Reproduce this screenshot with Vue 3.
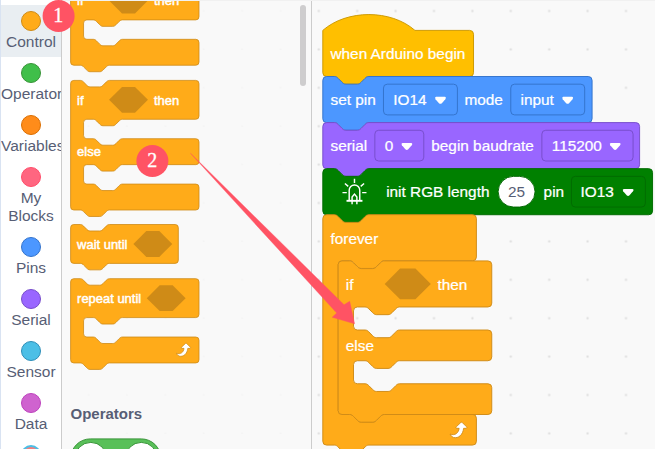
<script setup>
const categories = [
  { name: 'Control', color: '#FFAB19', ring: '#CF8B17', active: true },
  { name: 'Operators', color: '#40BF4A', ring: '#389438' },
  { name: 'Variables', color: '#FF8C1A', ring: '#DB6E00' },
  { name: 'My Blocks', color: '#FF6680', ring: '#FF4D6A', wrap: true },
  { name: 'Pins', color: '#4C97FF', ring: '#3373CC' },
  { name: 'Serial', color: '#9966FF', ring: '#774DCB' },
  { name: 'Sensor', color: '#4CBFE6', ring: '#2E8EB8' },
  { name: 'Data', color: '#CF63CF', ring: '#BD42BD' },
  { name: '', color: '#F08080', ring: '#4CBFE6', thick: true },
]

const notch = 'c2,0 3,1 4,2 l4,4 c1,1 2,2 4,2 h12 c2,0 3,-1 4,-2 l4,-4 c1,-1 2,-2 4,-2 '
const notchBack = 'c-2,0 -3,1 -4,2 l-4,4 c-1,1 -2,2 -4,2 h-12 c-2,0 -3,-1 -4,-2 l-4,-4 c-1,-1 -2,-2 -4,-2 '
const top = 'M0,4 A4,4 0 0,1 4,0 H12 ' + notch

// sections alternate: row height, mouth height, row height, ...
function blockPath(width, sections, hat = false) {
  let d = hat ? 'M0,0 c25,-22 71,-22 96,0 ' : top
  sections.forEach((size, i) => {
    if (i % 2 === 0) {
      d += `H${width - 4} a4,4 0 0,1 4,4 v${size - 8} a4,4 0 0,1 -4,4 `
    } else {
      d += `H64 ${notchBack} h-8 a4,4 0 0,0 -4,4 v${size - 8} a4,4 0 0,0 4,4 h8 ${notch}`
    }
  })
  return d + `H48 ${notchBack} H4 a4,4 0 0,1 -4,-4 z`
}

const hexagon = 'm16,0 h16 l16,16 -16,16 h-16 l-16,-16 z'
const caret = 'M1,0 H10 Q12,.6 10.6,2.4 L7,6.6 Q5.500,8 4,6.600 L.4,2.400 Q-.8,.6 1,0 z'
const loop = 'M0,12.500 C5,14.500 9,11.500 9.500,6.500 H6.600 Q5.800,6 6.500,5 L11.300,.4 Q12,-.2 12.700,.4 L17.300,5 Q18,6 17,6.500 H14.200 C13.500,13 9,17.500 3.500,16 Q1,15 0,12.500 z'

const orange = { fill: '#FFAB19', stroke: '#CF8B17' }
const palette = [
  { x: 8.600, y: -19, d: blockPath(158.500, [48, 24, 32]), texts: [[8, 29.800, 'if'], [103, 29.800, 'then']], hex: 47.500 },
  { x: 8.600, y: 80.400, d: blockPath(158.500, [48, 24, 32, 24, 32]), texts: [[8, 29.800, 'if'], [103, 29.800, 'then'], [8, 93.500, 'else']], hex: 47.500 },
  { x: 8.600, y: 224.500, d: blockPath(133, [48]), texts: [[8, 29.800, 'wait until']], hex: 77.500 },
  { x: 8.600, y: 278.700, d: blockPath(158.500, [48, 24, 32]), texts: [[8, 29.800, 'repeat until']], hex: 94, loop: [130.500, 79.500] },
]

const script = [
  {
    x: 10.800, y: 30.400, fill: '#FFBF00', stroke: '#CC9900', d: blockPath(157, [48], true),
    texts: [[8, 30, 'when Arduino begin']],
  },
  {
    x: 10.800, y: 76.500, fill: '#4C97FF', stroke: '#3373CC', d: blockPath(280.500, [48]),
    texts: [[8, 30, 'set pin'], [73.500, 30, 'IO14'], [147.500, 30, 'mode'], [206, 30, 'input']],
    fields: [[63.200, 77, 117], [195.800, 77, 249.500]],
  },
  {
    x: 10.800, y: 122.600, fill: '#9966FF', stroke: '#774DCB', d: blockPath(330, [48]),
    texts: [[8, 30, 'serial'], [64.500, 30, '0'], [113, 30, 'begin baudrate'], [238.500, 30, '115200']],
    fields: [[54.200, 51, 82], [228.200, 95, 299]],
  },
  {
    x: 10.800, y: 168.650, fill: '#008000', stroke: '#006B00', d: blockPath(343.500, [48]),
    texts: [[66, 30, 'init RGB length'], [230, 30, 'pin'], [268.500, 30, 'IO13']],
    fields: [[259, 77, 312.500]], led: true, number: '25',
  },
  {
    x: 10.800, y: 214.700, ...orange, d: blockPath(160, [48, 160, 32]),
    texts: [[8, 30.600, 'forever']], loop: [132.500, 216],
  },
  {
    x: 26.150, y: 260.900, ...orange, d: blockPath(160, [48, 24, 32, 24, 32]),
    texts: [[8, 30, 'if'], [103.500, 30, 'then'], [8, 94, 'else']], hex: 48.500,
  },
]
</script>

<template>
  <div class="editor">
    <nav class="categories">
      <div v-for="c in categories" :key="c.color" class="category" :class="{ active: c.active, wrap: c.wrap }">
        <span class="bubble" :class="{ thick: c.thick }" :style="{ background: c.color, borderColor: c.ring }"></span>
        <span class="label">{{ c.name }}</span>
      </div>
    </nav>

    <section class="palette">
      <svg class="canvas" width="249" height="449" viewBox="0 0 249 449">
        <defs>
          <pattern id="palette-dots" x="7" y="-9" width="38.4" height="38.4" patternUnits="userSpaceOnUse">
            <rect x="18.500" y="19.200" width="2" height="1.500" fill="#f4f4f4" />
          </pattern>
        </defs>
        <rect width="249" height="449" fill="url(#palette-dots)" />
        <g v-for="(b, i) in palette" :key="i" :transform="`translate(${b.x} ${b.y}) scale(.81)`">
          <path :d="b.d" fill="#FFAB19" stroke="#CF8B17" />
          <path :d="hexagon" :transform="`translate(${b.hex} 8)`" fill="#CF8B17" />
          <text v-for="t in b.texts" :key="t[2]" :x="t[0]" :y="t[1]" class="small">{{ t[2] }}</text>
          <path v-if="b.loop" :d="loop" :transform="`translate(${b.loop[0]} ${b.loop[1]})`" fill="#fff" stroke="#CF8B17" stroke-width=".9" />
        </g>
        <text x="8.500" y="419" class="heading">Operators</text>
        <g transform="translate(8.8 438.9)">
          <rect width="90" height="39" rx="19.500" fill="#59C059" stroke="#389438" />
          <rect x="4" y="3.500" width="32" height="32" rx="16" fill="#fff" stroke="#389438" />
          <rect x="54.500" y="3.500" width="32" height="32" rx="16" fill="#fff" stroke="#389438" />
        </g>
        <rect x="238" y="5" width="6" height="81" rx="3" fill="#CECDCE" />
      </svg>
    </section>

    <section class="workspace">
      <svg class="canvas" width="343" height="449" viewBox="0 0 343 449">
        <defs>
          <pattern id="dots" x="-12.4" y="-8.2" width="38.4" height="38.4" patternUnits="userSpaceOnUse">
            <rect x="18.200" y="18.200" width="2" height="2" fill="#ddd" />
          </pattern>
        </defs>
        <rect width="343" height="449" fill="url(#dots)" />
        <g v-for="(b, i) in script" :key="i" :transform="`translate(${b.x} ${b.y}) scale(.96)`">
          <path :d="b.d" :fill="b.fill" :stroke="b.stroke" />
          <path v-if="b.hex" :d="hexagon" :transform="`translate(${b.hex} 8)`" :fill="b.stroke" />
          <g v-for="f in b.fields || []" :key="f[0]">
            <rect :x="f[0]" y="8" :width="f[1]" height="32" rx="4" fill="none" :stroke="b.stroke" />
            <path :d="caret" :transform="`translate(${f[2]} 21.2)`" fill="#fff" />
          </g>
          <text v-for="t in b.texts" :key="t[2]" :x="t[0]" :y="t[1]">{{ t[2] }}</text>
          <g v-if="b.number">
            <rect x="182.600" y="8" width="38.500" height="32" rx="16" fill="#fff" stroke="#006400" />
            <text x="201.800" y="30" text-anchor="middle" class="value">{{ b.number }}</text>
          </g>
          <g v-if="b.led" transform="translate(33 24.5)" fill="none" stroke="#fff" stroke-width="1.500">
            <path d="M-5.500,8.500 V-2 a5.500,5.500 0 0,1 11,0 V8.500" />
            <path d="M-8.300,9 H8.300" stroke-width="2" />
            <path d="M-2.500,12.500 V5 L0,2 2.500,5 V12.500 M0,-9.500 V-14 M-6.500,-6 L-10,-9 M6.500,-6 L10,-9 M-8,.5 H-12.500 M8,.5 H12.500" />
          </g>
          <path v-if="b.loop" :d="loop" :transform="`translate(${b.loop[0]} ${b.loop[1]})`" fill="#fff" stroke="#CF8B17" stroke-width=".9" />
        </g>
      </svg>
    </section>

    <svg class="annotations" width="655" height="449" viewBox="0 0 655 449">
      <rect x="62" width="593" height="1" fill="#f1f1f1" />
      <path d="M190.500,153.300 L344,304.700 349.700,301.300 354.600,323.800 332.200,317.300 336.700,313 z" fill="#FF5364" stroke="#FF5364" stroke-width=".4" />
      <circle cx="58.600" cy="16" r="16" fill="#FF5364" />
      <text x="58.300" y="22.300" class="step">1</text>
      <circle cx="152.400" cy="161" r="16" fill="#FF5364" />
      <text x="152.200" y="167.300" class="step">2</text>
    </svg>
  </div>
</template>

<style>
body {
  overflow: hidden;
}
</style>

<style scoped>
.editor {
  position: relative;
  display: flex;
  width: 655px;
  height: 449px;
  overflow: hidden;
  background: #f9f9f9;
  font-family: "Liberation Sans", Arial, sans-serif;
}
.categories {
  box-sizing: border-box;
  flex: none;
  width: 62px;
  padding-top: 5px;
  overflow: hidden;
  background: #fff;
  border-left: 1px solid #d9e3f2;
  border-right: 1px solid #ccc;
}
.category {
  box-sizing: border-box;
  display: flex;
  flex-direction: column;
  align-items: center;
  height: 52px;
  padding-top: 6px;
  color: #575e75;
  font-size: 15.5px;
  line-height: 18px;
  text-align: center;
}
.category.wrap {
  height: 70px;
}
.category.active {
  background: #e9eef2;
}
.bubble {
  box-sizing: border-box;
  flex: none;
  width: 20px;
  height: 20px;
  margin-bottom: 2px;
  border: 1px solid;
  border-radius: 50%;
}
.bubble.thick {
  border-width: 2px;
}
.label {
  width: 60px;
}
.palette {
  box-sizing: border-box;
  flex: none;
  width: 250px;
  border-right: 1px solid #ccc;
}
.workspace {
  flex: 1;
}
.canvas {
  display: block;
}
.canvas text {
  fill: #fff;
  stroke: #fff;
  stroke-width: 0.25px;
  font-size: 16px;
}
.canvas .small {
  stroke-width: 0.6px;
}
.canvas .value {
  fill: #575e75;
  stroke: none;
}
.canvas .heading {
  fill: #575e75;
  stroke: none;
  font-size: 15px;
  font-weight: 700;
}
.annotations {
  position: absolute;
  inset: 0;
  pointer-events: none;
}
.step {
  fill: #fff;
  stroke: #fff;
  stroke-width: 0.3px;
  font-family: "Liberation Serif", "Times New Roman", serif;
  font-size: 20px;
  text-anchor: middle;
}
</style>
